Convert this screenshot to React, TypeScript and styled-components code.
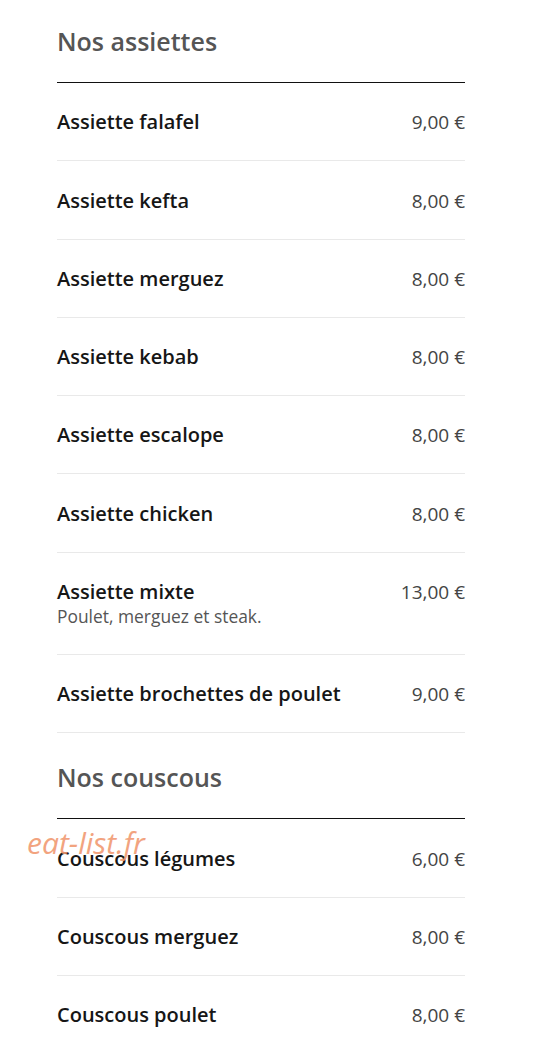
import React from "react";
import styled, { createGlobalStyle } from "styled-components";

const GlobalStyle = createGlobalStyle`
  html, body {
    margin: 0;
    padding: 0;
    background: #ffffff;
  }
  body {
    font-family: "Open Sans", "Liberation Sans", sans-serif;
  }
`;

const Page = styled.div`
  position: relative;
  width: 408px;
  padding: 0 71px 0 57px;
`;

const Section = styled.section`
  & + & {
    margin-top: 3px;
  }
`;

const Heading = styled.h2`
  margin: 0;
  padding: 26px 0 26px;
  font-size: 25px;
  line-height: 30px;
  font-weight: 600;
  color: #555555;
  border-bottom: 1px solid #111111;
`;

const Row = styled.div`
  display: flex;
  justify-content: space-between;
  align-items: flex-start;
  padding: 27.3px 0 26px;
  border-bottom: 1px solid #e9e9e9;
`;

const Info = styled.div`
  display: flex;
  flex-direction: column;
`;

const Name = styled.div`
  font-size: 20px;
  line-height: 24px;
  font-weight: 600;
  color: #161616;
`;

const Desc = styled.div`
  font-size: 17.4px;
  line-height: 24px;
  color: #555555;
`;

const Price = styled.div`
  font-size: 19px;
  line-height: 24px;
  color: #444444;
  white-space: nowrap;
`;

const Watermark = styled.div`
  position: absolute;
  left: 27px;
  top: 825px;
  font-size: 30px;
  line-height: 36px;
  font-style: italic;
  color: #f19a72;
  opacity: 0.9;
  pointer-events: none;
`;

type Item = { name: string; price: string; desc?: string };

const menu: { title: string; items: Item[] }[] = [
  {
    title: "Nos assiettes",
    items: [
      { name: "Assiette falafel", price: "9,00 €" },
      { name: "Assiette kefta", price: "8,00 €" },
      { name: "Assiette merguez", price: "8,00 €" },
      { name: "Assiette kebab", price: "8,00 €" },
      { name: "Assiette escalope", price: "8,00 €" },
      { name: "Assiette chicken", price: "8,00 €" },
      { name: "Assiette mixte", price: "13,00 €", desc: "Poulet, merguez et steak." },
      { name: "Assiette brochettes de poulet", price: "9,00 €" },
    ],
  },
  {
    title: "Nos couscous",
    items: [
      { name: "Couscous légumes", price: "6,00 €" },
      { name: "Couscous merguez", price: "8,00 €" },
      { name: "Couscous poulet", price: "8,00 €" },
    ],
  },
];

export default function App() {
  return (
    <>
      <GlobalStyle />
      <Page>
        {menu.map((section) => (
          <Section key={section.title}>
            <Heading>{section.title}</Heading>
            {section.items.map((item) => (
              <Row key={item.name}>
                <Info>
                  <Name>{item.name}</Name>
                  {item.desc && <Desc>{item.desc}</Desc>}
                </Info>
                <Price>{item.price}</Price>
              </Row>
            ))}
          </Section>
        ))}
        <Watermark>eat-list.fr</Watermark>
      </Page>
    </>
  );
}
